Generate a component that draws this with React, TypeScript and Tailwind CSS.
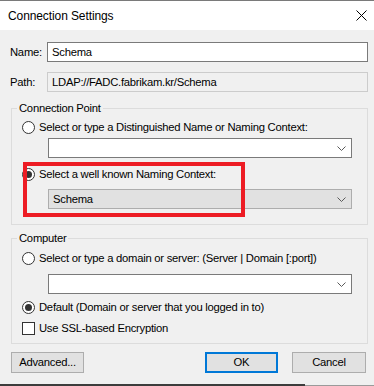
import React from "react";

const font = { fontFamily: '"Liberation Sans", Arial, sans-serif' };

function Chevron() {
  return (
    <svg width="9" height="5" viewBox="0 0 9 5" className="shrink-0">
      <polyline points="0.5,0.5 4.5,4.5 8.5,0.5" fill="none" stroke="#5a5a5a" strokeWidth="1" />
    </svg>
  );
}

function Radio({ checked }: { checked?: boolean }) {
  return (
    <span className="w-[13px] h-[13px] rounded-full border border-[#333333] bg-white flex items-center justify-center shrink-0">
      {checked && <span className="w-[7px] h-[7px] rounded-full bg-[#333333]" />}
    </span>
  );
}

function Combo({ value, gray }: { value?: string; gray?: boolean }) {
  return (
    <div
      className={
        "ml-[36px] mr-[15px] h-[20px] flex items-center justify-between pl-[4px] pr-[5px] border " +
        (gray ? "bg-[#e1e1e1] border-[#adadad]" : "bg-white border-[#7a7a7a]")
      }
    >
      <span>{value ?? ""}</span>
      <Chevron />
    </div>
  );
}

export default function App() {
  return (
    <div className="relative w-[374px] h-[386px] bg-[#f0f0f0] text-[11.25px] tracking-[-0.25px] text-black flex flex-col overflow-hidden" style={font}>
      <div className="h-[30px] bg-white border-t border-[#7a7a7a] flex items-center justify-between pl-[8px] pr-[7px] shrink-0">
        <span className="text-[12px] tracking-[-0.1px]">Connection Settings</span>
        <svg width="11" height="11" viewBox="0 0 11 11">
          <path d="M0.5 0.5 L10.5 10.5 M10.5 0.5 L0.5 10.5" stroke="#000" strokeWidth="1" />
        </svg>
      </div>

      <div className="flex flex-col pl-[10px] pr-[6px] pt-[12px]">
        <div className="flex items-center h-[20px]">
          <span className="w-[37px]">Name:</span>
          <div className="flex-1 h-[20px] bg-white border border-[#7a7a7a] flex items-center pl-[4px]">Schema</div>
        </div>
        <div className="flex items-center h-[20px] mt-[10px]">
          <span className="w-[37px]">Path:</span>
          <div className="flex-1 h-[20px] bg-[#f0f0f0] border border-[#cccccc] flex items-center pl-[4px]">LDAP://FADC.fabrikam.kr/Schema</div>
        </div>

        <fieldset className="ml-[1px] mt-[8px] border border-[#dcdcdc] pb-[15px]">
          <legend className="ml-[5px] px-[2px] leading-[16px]">Connection Point</legend>
          <div className="flex items-center gap-[4px] h-[16px] mt-[3px] pl-[10px]">
            <Radio />
            <span>Select or type a Distinguished Name or Naming Context:</span>
          </div>
          <div className="mt-[3px]">
            <Combo />
          </div>
          <div className="flex items-center gap-[4px] h-[16px] mt-[8px] pl-[10px]">
            <Radio checked />
            <span>Select a well known Naming Context:</span>
          </div>
          <div className="mt-[7px]">
            <Combo value="Schema" gray />
          </div>
        </fieldset>

        <fieldset className="ml-[1px] mt-[5px] border border-[#dcdcdc] pb-[7px]">
          <legend className="ml-[5px] px-[2px] leading-[16px]">Computer</legend>
          <div className="flex items-center gap-[4px] h-[16px] mt-[4px] pl-[10px]">
            <Radio />
            <span>Select or type a domain or server: (Server | Domain [:port])</span>
          </div>
          <div className="mt-[8px]">
            <Combo />
          </div>
          <div className="flex items-center gap-[4px] h-[16px] mt-[5px] pl-[10px]">
            <Radio checked />
            <span>Default (Domain or server that you logged in to)</span>
          </div>
          <div className="flex items-center gap-[4px] h-[16px] mt-[5px] pl-[10px]">
            <span className="w-[13px] h-[13px] border border-[#333333] bg-white shrink-0" />
            <span>Use SSL-based Encryption</span>
          </div>
        </fieldset>
      </div>

      <div className="flex items-center pl-[11px] pr-[8px] mt-[8px]">
        <button className="w-[73px] h-[21px] bg-[#e1e1e1] border border-[#adadad] flex items-center justify-center">Advanced...</button>
        <div className="flex-1" />
        <button className="w-[73px] h-[21px] bg-[#e1e1e1] border-2 border-[#0078d7] flex items-center justify-center">OK</button>
        <button className="ml-[14px] w-[74px] h-[21px] bg-[#e1e1e1] border border-[#adadad] flex items-center justify-center">Cancel</button>
      </div>

      <div className="absolute left-0 bottom-0 w-[305px] h-[2px] bg-[#3c3c3c]" />
      <div className="absolute left-[305px] bottom-0 w-[69px] h-[1px] bg-[#9a9a9a]" />

      <div className="absolute left-[23px] top-[162px] w-[222px] h-[55px] border-4 border-[#ed1c24] pointer-events-none" />
    </div>
  );
}
